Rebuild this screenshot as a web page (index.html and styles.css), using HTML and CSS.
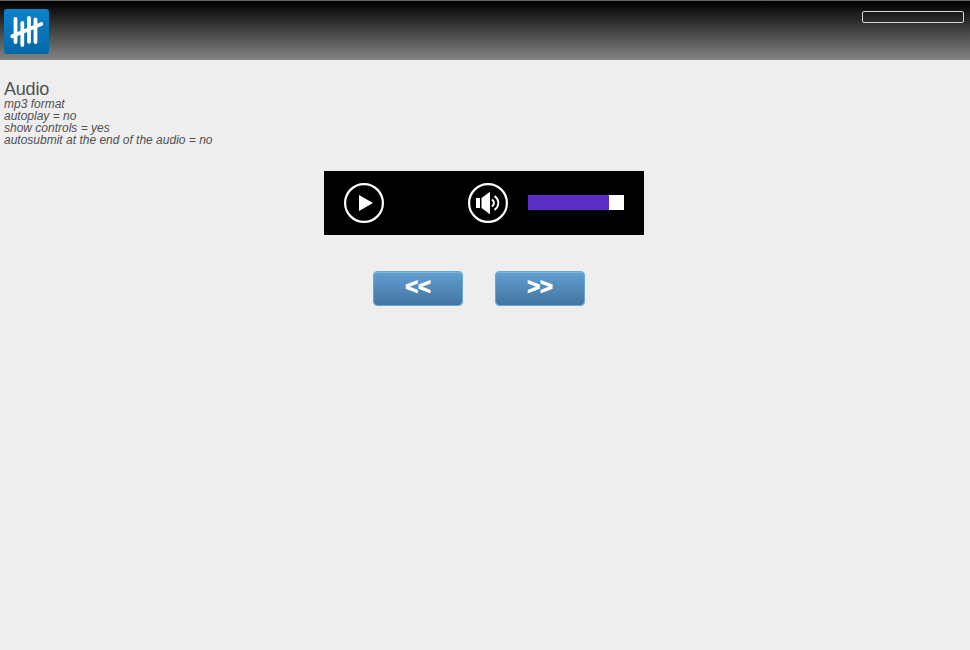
FILE: index.html
```html
<!DOCTYPE html>
<html lang="en">
<head>
<meta charset="utf-8">
<title>Audio</title>
<link rel="stylesheet" href="styles.css">
</head>
<body>
<header class="topbar">
  <svg class="logo" viewBox="0 0 45 45" aria-hidden="true">
    <defs><linearGradient id="blue" x1="0" y1="0" x2="0" y2="1"><stop offset="0" stop-color="#0c82cb"/><stop offset="1" stop-color="#0567a8"/></linearGradient></defs>
    <rect width="45" height="45" rx="3" fill="url(#blue)"/>
    <g stroke="#fff" stroke-width="3.8" stroke-linecap="round">
      <path d="M11.500 9.800V33M18.300 13.800V36M25 8.900V32.800M31.500 10.500V33M8.200 27.300L37.300 15"/>
    </g>
  </svg>
  <div class="progress"></div>
</header>
<main>
  <section class="question">
    <h1>Audio</h1>
    <p>mp3 format<br>autoplay = no<br>show controls = yes<br>autosubmit at the end of the audio = no</p>
  </section>
  <div class="player">
    <svg class="control" viewBox="0 0 40 40" aria-label="Play">
      <circle cx="20" cy="20" r="18.900" fill="none" stroke="#fff" stroke-width="2.2"/>
      <path d="M15 12L29 20L15 28Z" fill="#fff"/>
    </svg>
    <svg class="control speaker" viewBox="0 0 40 40" aria-label="Volume">
      <circle cx="20" cy="20" r="18.900" fill="none" stroke="#fff" stroke-width="2.2"/>
      <path d="M8 15H12V25H8ZM13.500 15L22 8.800V31.200L13.500 25Z" fill="#fff"/>
      <path d="M24 16.500Q28 20 24 23.500M26.500 13.200C31.500 16.500 31.500 23.500 26.500 26.800" fill="none" stroke="#fff" stroke-width="2"/>
    </svg>
    <div class="volume"><div class="level"></div></div>
  </div>
  <nav class="actions">
    <button>&lt;&lt;</button>
    <button>&gt;&gt;</button>
  </nav>
</main>
</body>
</html>
```

FILE: styles.css
```css
* { box-sizing: border-box; }
body {
  margin: 0;
  background: #eee;
  color: #505050;
  font-family: "Liberation Sans", Arial, sans-serif;
}
.topbar {
  display: flex;
  justify-content: space-between;
  align-items: flex-start;
  height: 60px;
  padding: 8px 6px 0 4px;
  border-top: 1px solid #666;
  background: linear-gradient(#000, #848484);
}
.logo { width: 45px; height: 45px; }
.progress {
  width: 102px;
  height: 12px;
  margin-top: 2px;
  border: 1px solid #d3d3d3;
  border-radius: 2px;
}
.question { padding: 20px 4px 0; height: 111px; }
h1 { margin: 0; font-size: 18px; line-height: 18px; font-weight: 400; letter-spacing: -0.2px; }
p { margin: 0; font-size: 12px; line-height: 12px; font-style: italic; }
.player {
  display: flex;
  align-items: center;
  width: 320px;
  height: 64px;
  margin-left: 324px;
  padding: 0 20px;
  background: #000;
}
.control { width: 40px; height: 40px; }
.speaker { margin-left: 84px; }
.volume {
  width: 96px;
  height: 15px;
  margin: 0 0 1px 20px;
  background: #fff;
}
.level { width: 81px; height: 15px; background: #5b2ec5; }
.actions { display: flex; gap: 32px; padding: 36px 0 0 373px; }
button {
  width: 90px;
  height: 35px;
  padding: 0 0 4px;
  border: 1px solid #61a9d3;
  border-radius: 4px;
  background: linear-gradient(#5f9fd0, #4474a3) padding-box;
  box-shadow: inset 0 1px 0 #83b5d8;
  color: #fff;
  font: bold 22px/28px "Liberation Sans", Arial, sans-serif;
  -webkit-text-stroke: 0.8px #fff;
}
```
